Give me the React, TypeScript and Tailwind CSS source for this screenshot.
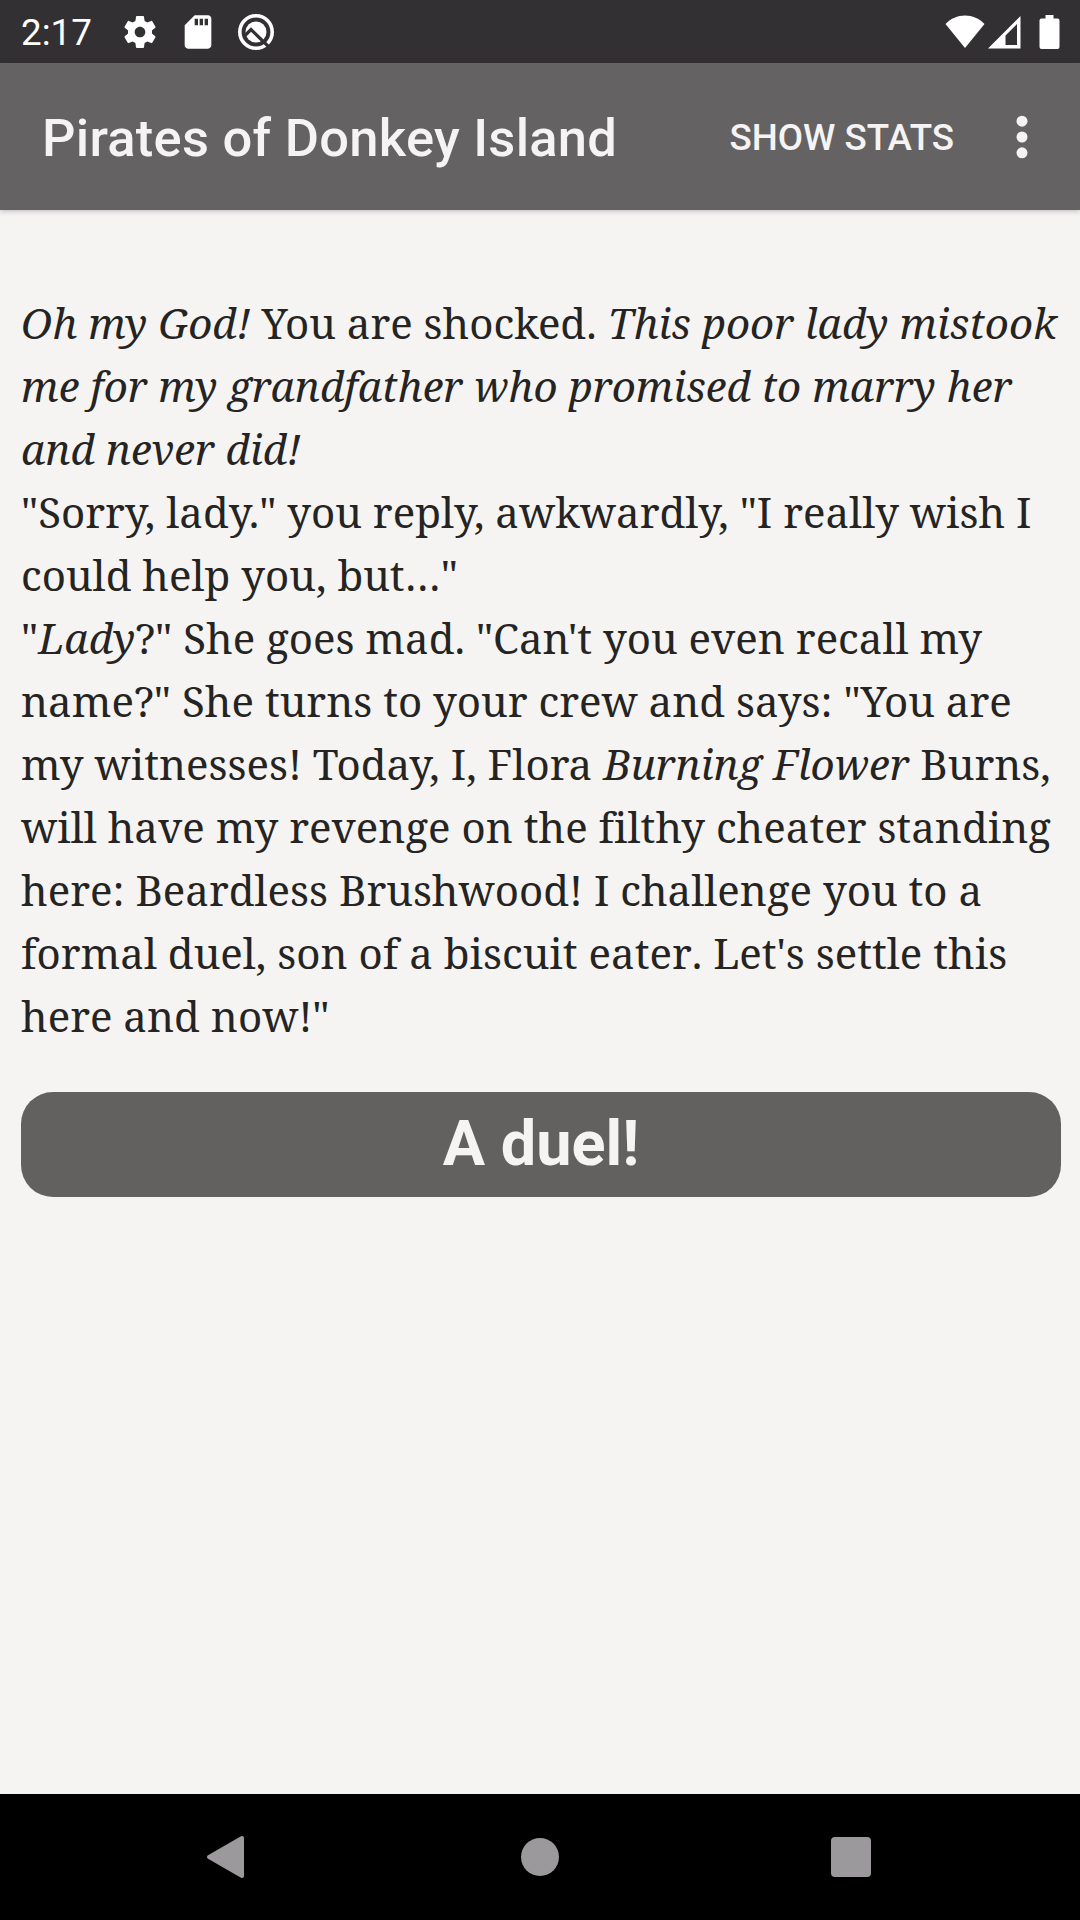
import type { ReactNode } from "react";

const story: ReactNode[] = [
  <>
    <i>Oh my God!</i> You are shocked. <i>This poor lady mistook</i>
  </>,
  <i>me for my grandfather who promised to marry her</i>,
  <i>and never did!</i>,
  '"Sorry, lady." you reply, awkwardly, "I really wish I',
  'could help you, but…"',
  <>
    "<i>Lady</i>?" She goes mad. "Can't you even recall my
  </>,
  'name?" She turns to your crew and says: "You are',
  <>
    my witnesses! Today, I, Flora <i>Burning Flower</i> Burns,
  </>,
  "will have my revenge on the filthy cheater standing",
  "here: Beardless Brushwood! I challenge you to a",
  <>
    formal duel, son of a biscuit eater<span className="inline-block">.</span> Let's settle this
  </>,
  'here and now!"',
];

function StatusBar() {
  return (
    <div className="flex h-[63px] shrink-0 items-center justify-between bg-[#323032] text-white">
      <div className="flex items-center pl-[21px]">
        <span className="w-[97px] pt-[3px] text-[36.75px] leading-none">2:17</span>
        {/* Settings */}
        <svg className="h-[40px] w-[44px]" viewBox="0 0 24 24" fill="currentColor">
          <path d="M19.14 12.94c.04-.3.06-.61.06-.94 0-.32-.02-.64-.07-.94l2.03-1.58c.18-.14.23-.41.12-.61l-1.92-3.32c-.12-.22-.37-.29-.59-.22l-2.39.96c-.5-.38-1.03-.7-1.62-.94l-.36-2.54c-.04-.24-.24-.41-.48-.41h-3.84c-.24 0-.43.17-.47.41l-.36 2.54c-.59.24-1.13.57-1.62.94l-2.39-.96c-.22-.08-.47 0-.59.22L2.74 8.87c-.12.21-.08.47.12.61l2.03 1.58c-.05.3-.09.63-.09.94s.02.64.07.94l-2.03 1.58c-.18.14-.23.41-.12.61l1.92 3.32c.12.22.37.29.59.22l2.39-.96c.5.38 1.03.7 1.62.94l.36 2.54c.05.24.24.41.48.41h3.84c.24 0 .44-.17.47-.41l.36-2.54c.59-.24 1.13-.56 1.62-.94l2.39.96c.22.08.47 0 .59-.22l1.92-3.32c.12-.22.07-.47-.12-.61l-2.01-1.58zM12 15.2c-1.76 0-3.2-1.44-3.2-3.2s1.44-3.2 3.2-3.2 3.2 1.44 3.2 3.2-1.44 3.2-3.2 3.2z" />
        </svg>
        {/* SD card */}
        <svg className="ml-[16px] h-[40px] w-[40px]" viewBox="0 0 24 24" fill="currentColor">
          <path d="M18 2h-8L4.020 8 4 20c0 1.100.9 2 2 2h12c1.100 0 2-.9 2-2V4c0-1.100-.9-2-2-2zm-6 6h-2V4h2v4zm3 0h-2V4h2v4zm3 0h-2V4h2v4z" />
        </svg>
        {/* Android Q */}
        <svg className="ml-[18px] h-[40px] w-[40px]" viewBox="0 0 40 40" fill="none">
          <circle cx="20" cy="20" r="16.200" stroke="white" strokeWidth="3.600" />
          <circle cx="20" cy="20" r="10.500" fill="white" />
          <path d="M9 23.500l6-6 18.500 18" stroke="#323032" strokeWidth="3.200" />
        </svg>
      </div>
      <div className="flex items-center pr-[20px]">
        <svg className="h-[34px] w-[40px]" viewBox="0 0 40 34" fill="currentColor">
          <path d="M20 33L.5 9C6 3.400 12.500.5 20 .5S34 3.400 39.500 9z" />
        </svg>
        <svg className="ml-[3px] h-[34px] w-[33px]" viewBox="0 0 33 34" fill="currentColor">
          <path fillRule="evenodd" d="M0 33.500L32.500 1v32.500zM17.500 30H29V9L17.500 20.500z" />
        </svg>
        <svg className="ml-[18px] h-[34px] w-[21px]" viewBox="0 0 21 34" fill="currentColor">
          <path d="M6.500 0h8v3.500h4a2 2 0 0 1 2 2V32a2 2 0 0 1-2 2h-16a2 2 0 0 1-2-2V5.500a2 2 0 0 1 2-2h4z" />
        </svg>
      </div>
    </div>
  );
}

function Toolbar() {
  return (
    <header className="flex h-[147px] shrink-0 items-center bg-[#646262] pr-[52px] pl-[42px] font-medium text-[#f5f3f4] shadow-[0_1px_5px_rgba(60,40,60,0.3)]">
      <h1 className="flex-1 pt-[4px] text-[52.5px] leading-none tracking-[0.26px] whitespace-nowrap">
        Pirates of Donkey Island
      </h1>
      <button className="mr-[62px] pt-[3px] text-[36.75px] leading-none whitespace-nowrap">SHOW STATS</button>
      <svg className="h-[44px] w-[12px]" viewBox="0 0 12 44" fill="currentColor">
        <circle cx="6" cy="6.200" r="5.500" />
        <circle cx="6" cy="22" r="5.500" />
        <circle cx="6" cy="37.800" r="5.500" />
      </svg>
    </header>
  );
}

function NavBar() {
  return (
    <nav className="flex h-[126px] shrink-0 items-center justify-between bg-black pr-[209px] pl-[206px] text-[#9b999b]">
      <svg className="h-[44px] w-[42px]" viewBox="0 0 42 44" fill="currentColor">
        <path d="M3 22L36 3v38z" stroke="currentColor" strokeWidth="4" strokeLinejoin="round" />
      </svg>
      <div className="size-[38px] rounded-full bg-[#9b999b]" />
      <div className="size-[40px] rounded-[4px] bg-[#9b999b]" />
    </nav>
  );
}

export default function App() {
  return (
    <div className="flex h-[1920px] w-[1080px] flex-col overflow-hidden bg-[#f5f4f2] font-[Roboto,sans-serif]">
      <StatusBar />
      <Toolbar />
      <main className="flex-1 pt-[81px] pr-[19px] pl-[21px]">
        <div className="font-['Noto_Serif','Droid_Serif',serif] text-[42px] leading-[63px] tracking-[0.01px] whitespace-nowrap text-[#252423]">
          {story.map((line, i) => (
            <p key={i}>{line}</p>
          ))}
        </div>
        <button className="mt-[45px] flex h-[105px] w-full items-center justify-center rounded-[32px] bg-[#62615f] pb-[2px] text-[63px] leading-none font-bold text-[#f5f4f2]">
          A duel!
        </button>
      </main>
      <NavBar />
    </div>
  );
}
